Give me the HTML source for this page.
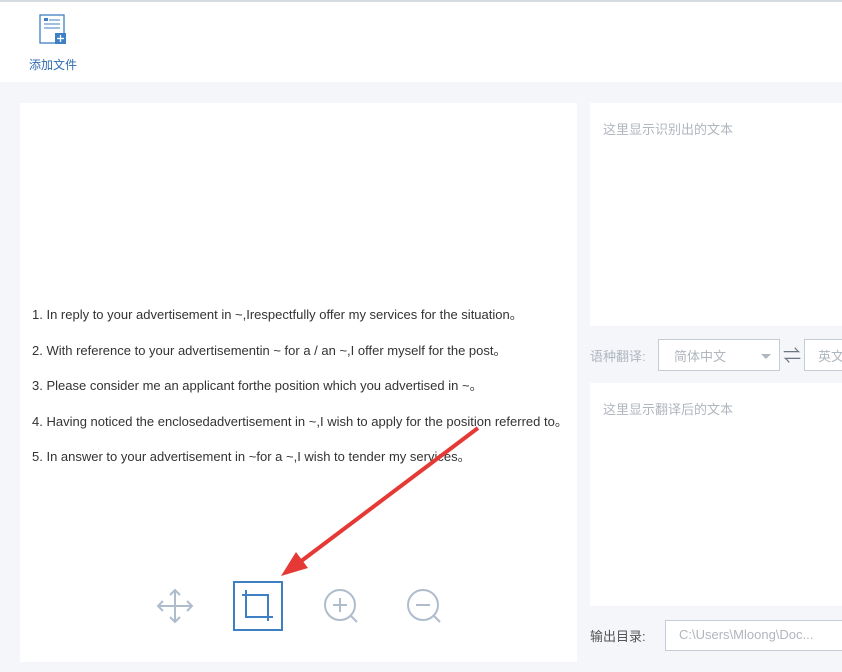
<!DOCTYPE html>
<html><head><meta charset="utf-8"><style>
*{margin:0;padding:0;box-sizing:border-box}
body{width:842px;height:672px;background:#f4f6f9;font-family:"Liberation Sans","Noto Sans CJK SC",sans-serif;position:relative;overflow:hidden}
.top{position:absolute;left:0;top:0;width:842px;height:82px;background:#fff;border-top:2px solid #d5dbe0}
.lbl{position:absolute;left:29px;top:54px;font-size:12px;color:#2f6db0}
.panel{position:absolute background:#fff}
.panel{position:absolute;background:#fff}
.line{position:absolute;left:32px;font-size:13px;color:#333}
.ph{position:absolute;font-size:13px;color:#b0b6be}
.sel{position:absolute;border:1px solid #c4ccd6;background:#fff;font-size:13px;color:#b0b6be}
</style></head><body>
<div class="top">
<svg style="position:absolute;left:38px;top:11px" width="30" height="34" viewBox="0 0 30 34">
<rect x="2" y="2" width="24" height="28" fill="#fff" stroke="#3f80c4" stroke-width="1.3"/>
<rect x="6" y="5" width="4" height="3" fill="#3f80c4"/>
<line x1="11" y1="7" x2="22" y2="7" stroke="#3f80c4"/>
<line x1="6" y1="11" x2="22" y2="11" stroke="#3f80c4"/>
<line x1="6" y1="15" x2="22" y2="15" stroke="#3f80c4"/>
<rect x="17" y="20" width="11" height="11" fill="#3f80c4"/>
<line x1="22.5" y1="22" x2="22.5" y2="29" stroke="#fff" stroke-width="1.3"/>
<line x1="19" y1="25.5" x2="26" y2="25.5" stroke="#fff" stroke-width="1.3"/>
</svg>
<div class="lbl">添加文件</div>
</div>
<div class="panel" style="left:20px;top:103px;width:557px;height:559px"></div>
<div class="line" style="top:304px">1. In reply to your advertisement in ~,Irespectfully offer my services for the situation。</div>
<div class="line" style="top:340px">2. With reference to your advertisementin ~ for a / an ~,I offer myself for the post。</div>
<div class="line" style="top:375px">3. Please consider me an applicant forthe position which you advertised in ~。</div>
<div class="line" style="top:411px">4. Having noticed the enclosedadvertisement in ~,I wish to apply for the position referred to。</div>
<div class="line" style="top:446px">5. In answer to your advertisement in ~for a ~,I wish to tender my services。</div>
<svg style="position:absolute;left:150px;top:580px" width="310" height="55" viewBox="150 580 310 55">
<g stroke="#aebccc" stroke-width="2" fill="none">
<line x1="159" y1="606" x2="191" y2="606"/><line x1="175" y1="590" x2="175" y2="622"/>
<polyline points="163,601 158,606 163,611"/><polyline points="187,601 192,606 187,611"/>
<polyline points="170,595 175,590 180,595"/><polyline points="170,617 175,622 180,617"/>
<circle cx="340" cy="605" r="15"/><line x1="340" y1="598" x2="340" y2="612"/><line x1="333" y1="605" x2="347" y2="605"/>
<line x1="351" y1="616" x2="357" y2="622"/>
<circle cx="423" cy="605" r="15"/><line x1="416" y1="605" x2="430" y2="605"/>
<line x1="434" y1="616" x2="440" y2="622"/>
</g>
<rect x="234" y="582" width="48" height="48" fill="none" stroke="#3f80c4" stroke-width="2"/>
<g stroke="#3f80c4" stroke-width="2" fill="none"><polyline points="246,590 246,617 273,617"/><polyline points="242,595 268,595 268,621"/></g>
</svg>
<svg style="position:absolute;left:0;top:0" width="842" height="672">
<line x1="478" y1="428" x2="300" y2="562" stroke="#e53935" stroke-width="4"/>
<polygon points="281,576 296,552 308,568" fill="#e53935"/>
</svg>
<div class="panel" style="left:590px;top:103px;width:252px;height:223px"></div>
<div class="ph" style="left:603px;top:119px">这里显示识别出的文本</div>
<div class="ph" style="left:590px;top:346px">语种翻译:</div>
<div class="sel" style="left:658px;top:339px;width:122px;height:32px;padding:6px 0 0 15px">简体中文
<span style="position:absolute;right:8px;top:14px;border:5px solid transparent;border-top:5px solid #b0b6be"></span></div>
<div style="position:absolute;left:783px;top:342px;font-size:18px;color:#6c7683">⇌</div>
<div class="sel" style="left:804px;top:339px;width:50px;height:32px;padding:6px 0 0 13px">英文</div>
<div class="panel" style="left:590px;top:383px;width:252px;height:223px"></div>
<div class="ph" style="left:603px;top:399px">这里显示翻译后的文本</div>
<div style="position:absolute;left:590px;top:626px;font-size:13px;color:#555">输出目录:</div>
<div class="sel" style="left:665px;top:620px;width:190px;height:31px;padding:6px 0 0 13px;font-size:13px">C:\Users\Mloong\Doc...</div>
</body></html>
